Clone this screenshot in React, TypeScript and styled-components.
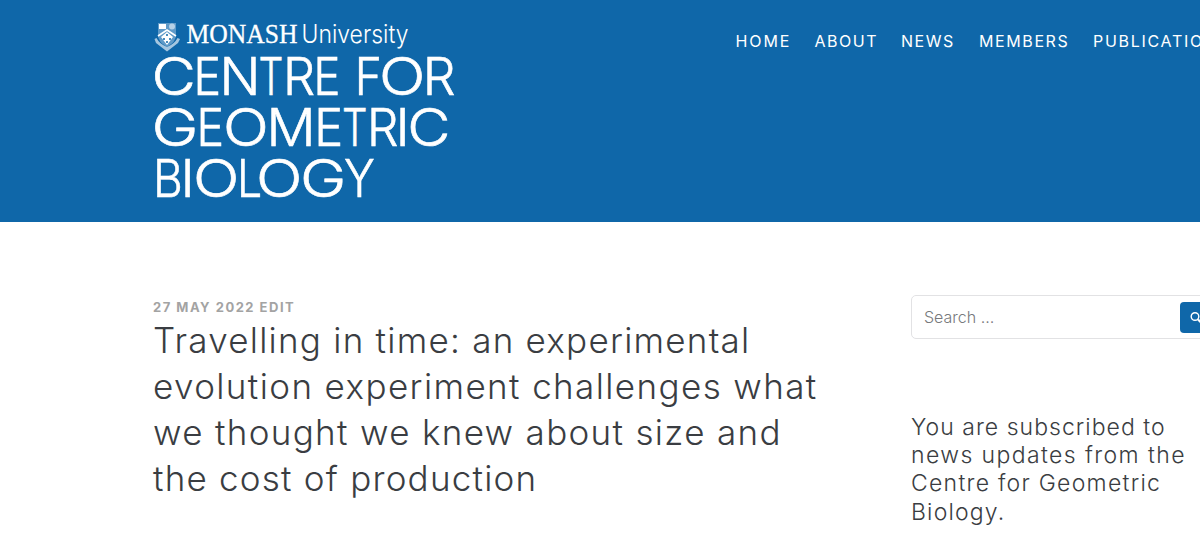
import React, { FC } from 'react';
import styled, { createGlobalStyle } from 'styled-components';

const GlobalStyle = createGlobalStyle`
  body {
    margin: 0;
    overflow: hidden;
    background: #fff;
    color: #3a3d42;
    font-family: Inter, 'Open Sans', sans-serif;
  }
`;
const Page = styled.div`
  width: 1200px;
  height: 534px;
  overflow: hidden;
`;
const Header = styled.header`
  display: flex;
  align-items: flex-start;
  height: 222px;
  padding-left: 150px;
  background: #0f67a9;
`;
const LogoLink = styled.a`
  flex: none;
  width: 585.5px;
  padding-top: 18px;
  & svg {
    display: block;
  }
`;
const Nav = styled.nav`
  display: flex;
  flex: none;
  gap: 24px;
  padding-top: 31px;
`;
const NavItem = styled.a<{ $width: number; $spacing: number }>`
  flex: none;
  width: ${({ $width }) => $width}px;
  color: #fff;
  font-size: 16px;
  line-height: 20px;
  letter-spacing: ${({ $spacing }) => $spacing}px;
  white-space: nowrap;
`;
const Content = styled.main`
  display: flex;
  padding: 73px 0 0 153px;
`;
const Article = styled.article`
  flex: none;
  width: 758px;
`;
const Meta = styled.div`
  padding-top: 4px;
  color: #a3a3a3;
  font-size: 13px;
  font-weight: 700;
  line-height: 16px;
  letter-spacing: 1.5px;
`;
const Title = styled.h1`
  margin: 2px 0 0;
  font-size: 35px;
  font-weight: 300;
  line-height: 46px;
`;
const Line = styled.span<{ $spacing: number }>`
  display: block;
  letter-spacing: ${({ $spacing }) => $spacing}px;
  white-space: nowrap;
`;
const Sidebar = styled.aside`
  flex: none;
  width: 320px;
`;
const SearchForm = styled.div`
  display: flex;
  align-items: center;
  justify-content: space-between;
  box-sizing: border-box;
  height: 44px;
  padding: 0 6px 0 12px;
  border: 1px solid #e2e2e4;
  border-radius: 5px;
`;
const Placeholder = styled.span`
  color: #77797c;
  font-size: 16px;
  font-weight: 350;
`;
const SearchButton = styled.button`
  display: flex;
  align-items: center;
  width: 44px;
  height: 31px;
  margin-top: 1px;
  padding: 0 0 0 10px;
  border: 0;
  border-radius: 4px;
  background: #0f67a9;
`;
const Notice = styled.h2`
  margin: 74px 0 0;
  font-size: 23px;
  font-weight: 300;
  line-height: 28.2px;
`;

const navItems = [
  { label: 'HOME', width: 55, spacing: 1.9 },
  { label: 'ABOUT', width: 62.5, spacing: 1.5 },
  { label: 'NEWS', width: 54, spacing: 1.5 },
  { label: 'MEMBERS', width: 90, spacing: 1.6 },
  { label: 'PUBLICATIONS', width: 150, spacing: 1.7 },
];
const titleLines = [
  { text: 'Travelling in time: an experimental', spacing: 1.24 },
  { text: 'evolution experiment challenges what', spacing: 1.39 },
  { text: 'we thought we knew about size and', spacing: 1.32 },
  { text: 'the cost of production', spacing: 1.22 },
];
const noticeLines = [
  { text: 'You are subscribed to', spacing: 1.02 },
  { text: 'news updates from the', spacing: 1.4 },
  { text: 'Centre for Geometric', spacing: 1.26 },
  { text: 'Biology.', spacing: 1.17 },
];

// advance, left bearing and ink width of each capital, in em
const capitals: Record<string, [number, number, number]> = {
  B: [0.65, 0.1, 0.49],
  C: [0.73, 0.065, 0.6],
  E: [0.6, 0.1, 0.435],
  F: [0.585, 0.1, 0.42],
  G: [0.745, 0.065, 0.61],
  I: [0.26, 0.1, 0.06],
  L: [0.56, 0.1, 0.4],
  M: [0.885, 0.1, 0.685],
  N: [0.745, 0.1, 0.545],
  O: [0.765, 0.065, 0.635],
  R: [0.63, 0.1, 0.47],
  T: [0.64, 0.05, 0.54],
  Y: [0.66, 0.03, 0.6],
};
// each letter with its left and right edge
type Letter = [string, number, number];
const logoLines: { y: number; letters: Letter[] }[] = [
  {
    y: 94.8,
    letters: [
      ['C', 155.5, 192],
      ['E', 198, 218],
      ['N', 225, 255],
      ['T', 260.5, 281.5],
      ['R', 288, 312],
      ['E', 318, 337.5],
      [' ', 342, 350],
      ['F', 359.5, 379],
      ['O', 383, 421.5],
      ['R', 428, 452.5],
    ],
  },
  {
    y: 145.8,
    letters: [
      ['G', 155.5, 194],
      ['E', 201, 221],
      ['O', 227, 265],
      ['M', 272, 310],
      ['E', 319, 340],
      ['T', 344, 365.5],
      ['R', 372, 395.5],
      ['I', 401, 404.3],
      ['C', 411, 446.5],
    ],
  },
  {
    y: 196.8,
    letters: [
      ['B', 157.5, 180],
      ['I', 186, 189.3],
      ['O', 197, 235.5],
      ['L', 241.5, 259.5],
      ['O', 260, 298.5],
      ['G', 304, 342],
      ['Y', 345.5, 373.5],
    ],
  },
];
const LOGO_SIZE = 52.5;

const LogoLetter: FC<{ letter: Letter }> = ({ letter: [char, left, right] }) => {
  if (char === ' ') return <tspan> </tspan>;
  const [advance, bearing, ink] = capitals[char];
  const scale = (right - left) / ink;
  return (
    <tspan
      x={left - bearing * scale}
      textLength={advance * scale}
      lengthAdjust="spacingAndGlyphs"
    >
      {char}
    </tspan>
  );
};

const Logo: FC = () => (
  <svg width="310" height="188" viewBox="150 18 310 188" fill="#fff">
    <g>
      <path d="M158 23h18v12q0 7-9 12q-9-5-9-12z" fill="#5f9ac8" />
      <path d="M159 24h7v5h-7z" />
      <circle cx="172" cy="26.5" r="3" fill="#b5d0e6" />
      <path d="M158 36l9-6l9 6" fill="none" stroke="#fff" strokeWidth="1.6" />
      <path d="M161 37l6-5l6 5l-6 8z" />
      <path
        d="M167 34v2M164 38v2M170 38v2M167 41v2"
        stroke="#0f67a9"
        strokeWidth="1.5"
      />
      <path
        d="M154.5 39l2-1q3 6 10.500 9q7.500-3 10.500-9l2.500 1l-2 4l-11 8.500l-11-8.500z"
        fill="#a5c6e0"
      />
    </g>
    <text
      x="186.5"
      y="42.5"
      fontFamily="'Liberation Serif', serif"
      fontSize="28"
      stroke="#fff"
      strokeWidth="0.3"
      textLength="111"
      lengthAdjust="spacingAndGlyphs"
    >
      MONASH
    </text>
    <text
      x="301.5"
      y="42.5"
      fontFamily="Inter, sans-serif"
      fontSize="25.5"
      fontWeight="300"
      textLength="107"
      lengthAdjust="spacingAndGlyphs"
    >
      University
    </text>
    <g
      fontFamily="Inter, sans-serif"
      fontSize={LOGO_SIZE}
      fontWeight="350"
      stroke="#fff"
      strokeWidth="0.6"
    >
      {logoLines.map(({ y, letters }) => (
        <text key={y} y={y}>
          {letters.map((letter) => (
            <LogoLetter key={letter[1]} letter={letter} />
          ))}
        </text>
      ))}
    </g>
  </svg>
);

const App: FC = () => (
  <Page>
    <GlobalStyle />
    <Header>
      <LogoLink>
        <Logo />
      </LogoLink>
      <Nav>
        {navItems.map(({ label, width, spacing }) => (
          <NavItem key={label} $width={width} $spacing={spacing}>
            {label}
          </NavItem>
        ))}
      </Nav>
    </Header>
    <Content>
      <Article>
        <Meta>27 MAY 2022 EDIT</Meta>
        <Title>
          {titleLines.map(({ text, spacing }) => (
            <Line key={text} $spacing={spacing}>
              {text}
            </Line>
          ))}
        </Title>
      </Article>
      <Sidebar>
        <SearchForm>
          <Placeholder>Search …</Placeholder>
          <SearchButton aria-label="Search">
            <svg width="14" height="14" fill="none" stroke="#fff" strokeWidth="1.4">
              <circle cx="5" cy="5.5" r="3.8" />
              <path d="M8 8.5l4.5 4.5" strokeWidth="2" />
            </svg>
          </SearchButton>
        </SearchForm>
        <Notice>
          {noticeLines.map(({ text, spacing }) => (
            <Line key={text} $spacing={spacing}>
              {text}
            </Line>
          ))}
        </Notice>
      </Sidebar>
    </Content>
  </Page>
);

export default App;
